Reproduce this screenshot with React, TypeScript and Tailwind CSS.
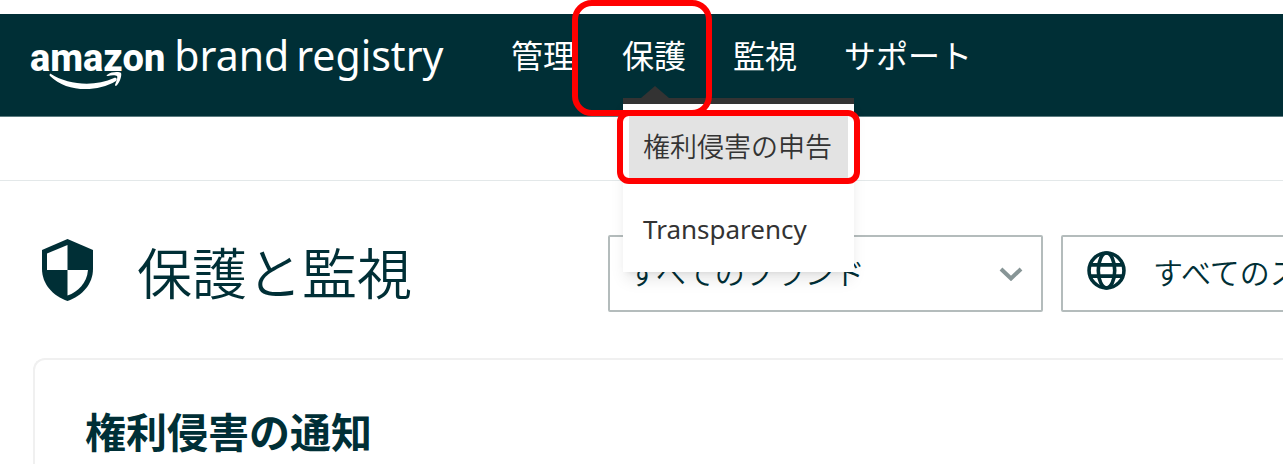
import { useState } from 'react';

const NAV_ITEMS = ['管理', '保護', '監視', 'サポート'];
const BRANDS = ['すべてのブランド'];
const STORES = ['すべてのストア'];

function Logo() {
  return (
    <a href="#" className="relative flex w-[416px] shrink-0 items-baseline gap-[9px] text-white">
      <span className="font-['Roboto',sans-serif] text-[38px] leading-[48px] font-extrabold">amazon</span>
      <span className="flex gap-[7px] font-['Noto_Sans',sans-serif] text-[41px] leading-[48px]">
        <span>brand</span>
        <span>registry</span>
      </span>
      <svg className="absolute top-[41px] left-4 h-5 w-20" viewBox="0 0 80 20" fill="#fff" aria-hidden="true">
        <path d="M5 2C22 13 49 15 68 6C70 5 72 7 70 9C50 21 20 20 4 4C3 3 4 1 5 2Z" />
        <path d="M61 3C66 -1 74 0 75 1C76 3 74 11 70 14C69 14 69 13 69 13C70 10 72 6 71 4C70 3 65 3 62 4C61 4 60 4 61 3Z" />
      </svg>
    </a>
  );
}

function ShieldIcon() {
  return (
    <svg className="h-[62px] w-[53px] shrink-0" viewBox="0 0 53 62" aria-hidden="true">
      <path d="M26.5 0L52 11V30C52 45 41 57 26.5 62C12 57 1 45 1 30V11Z" fill="#002f36" />
      <path d="M26.5 6V31H6V14.500Z" fill="#fff" />
      <path d="M26.500 31H47C46 44 37 53 26.500 56.500Z" fill="#fff" />
    </svg>
  );
}

function GlobeIcon() {
  return (
    <svg
      className="pointer-events-none absolute top-4 left-[26px] size-[39px]"
      viewBox="0 0 38 38"
      fill="none"
      stroke="#002f36"
      strokeWidth="3.5"
      aria-hidden="true"
    >
      <circle cx="19" cy="19" r="17" />
      <ellipse cx="19" cy="19" rx="8" ry="17" />
      <path d="M3 13.500H35M3 24.500H35" />
    </svg>
  );
}

function ProtectMenu() {
  return (
    <div className="absolute top-[84px] left-px z-10 w-[231px] border-t-[6px] border-[#333] bg-white font-['Noto_Sans',sans-serif] text-[#333] shadow-lg">
      <svg className="absolute -top-[18px] left-[18px] h-3 w-7" viewBox="0 0 28 12" aria-hidden="true">
        <path d="M14 0L28 12H0Z" fill="#333" />
      </svg>
      <div className="relative mx-[6px] mt-[10px]">
        <a
          href="#"
          className="flex h-16 items-center bg-[#e3e3e3] px-[14px] font-['Noto_Sans_CJK_JP',sans-serif] text-[27px] font-[350] whitespace-nowrap"
        >
          権利侵害の申告
        </a>
        <span className="pointer-events-none absolute -inset-x-3 -top-[4px] -bottom-[6px] rounded-xl border-[6px] border-[#f00]" />
      </div>
      <a href="#" className="flex h-[94px] items-center px-5 pt-2 text-[26px]">
        Transparency
      </a>
    </div>
  );
}

export default function App() {
  const [brand, setBrand] = useState(BRANDS[0]);
  const [store, setStore] = useState(STORES[0]);

  return (
    <div className="flex min-h-screen flex-col overflow-x-hidden bg-white pt-[14px] font-['Noto_Sans_CJK_JP',sans-serif] text-[#002f36]">
      <header className="flex h-[103px] items-start border-b border-[#5b7b7f] bg-[#002f36] pl-[30px]">
        <div className="pt-[17px]">
          <Logo />
        </div>
        <nav className="ml-[65px] flex gap-[47px] text-[32px] leading-[80px] text-white">
          {NAV_ITEMS.map((item) => (
            <div key={item} className="relative shrink-0">
              <a href="#" className="block">
                {item}
              </a>
              {item === '保護' ? (
                <>
                  <ProtectMenu />
                  <span className="pointer-events-none absolute -top-[14px] -left-[50px] z-20 h-[116px] w-[140px] rounded-[20px] border-[6px] border-[#f00]" />
                </>
              ) : null}
            </div>
          ))}
        </nav>
      </header>

      <div className="h-16 border-b border-[#e3e8e9]" />

      <main className="flex flex-1 flex-col">
        <div className="flex items-start pt-[54px]">
          <div className="flex w-[608px] shrink-0 items-center gap-[43px] pl-[41px]">
            <ShieldIcon />
            <h1 className="text-[55px] leading-[70px] font-[350]">保護と監視</h1>
          </div>
          <div className="flex shrink-0 gap-[18px] text-[30px] font-[350]">
            <label className="relative block w-[435px]">
              <span className="sr-only">ブランド</span>
              <select
                value={brand}
                onChange={(e) => setBrand(e.target.value)}
                className="h-[77px] w-full appearance-none rounded-xs border-2 border-[#b4bcbc] bg-white pb-1 pl-[18px]"
              >
                {BRANDS.map((name) => (
                  <option key={name}>{name}</option>
                ))}
              </select>
              <svg
                className="pointer-events-none absolute top-8 right-5 h-[14px] w-6"
                viewBox="0 0 24 14"
                fill="none"
                stroke="#879596"
                strokeWidth="4"
                aria-hidden="true"
              >
                <path d="M2 2L12 11.500L22 2" />
              </svg>
            </label>
            <label className="relative block w-[435px]">
              <span className="sr-only">ストア</span>
              <select
                value={store}
                onChange={(e) => setStore(e.target.value)}
                className="h-[77px] w-full appearance-none rounded-xs border-2 border-[#b4bcbc] bg-white pb-1 pl-[90px]"
              >
                {STORES.map((name) => (
                  <option key={name}>{name}</option>
                ))}
              </select>
              <GlobeIcon />
            </label>
          </div>
        </div>

        <section className="mt-[46px] ml-[33px] flex-1 rounded-tl-xl border-t-2 border-l-2 border-[#f0f0f0] pt-[42px] pl-[50px]">
          <h2 className="text-[41px] leading-[56px] font-bold">権利侵害の通知</h2>
        </section>
      </main>
    </div>
  );
}
